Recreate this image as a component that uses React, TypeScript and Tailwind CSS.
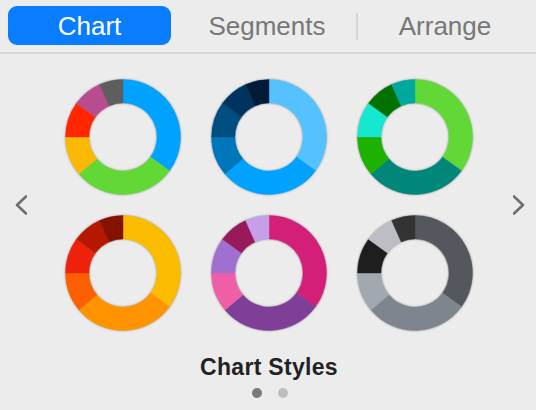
import React from "react";

const ANGLES = [126, 104, 40, 36, 30, 24];

const PALETTES: string[][] = [
  ["#00a2ff", "#61d836", "#fbb905", "#ff2600", "#b84c8e", "#5e5e5e"],
  ["#56c1ff", "#00a2ff", "#0076ba", "#004d80", "#003460", "#011b38"],
  ["#61d836", "#00877a", "#1db100", "#16e7cf", "#017100", "#00a89d"],
  ["#fbbc00", "#ff9300", "#fe5f00", "#ee220c", "#b51800", "#851100"],
  ["#d31f78", "#7f3e98", "#ef5fa7", "#a070d0", "#981a5a", "#c59fe8"],
  ["#55575e", "#7f858e", "#a1a8b0", "#1e1e1e", "#bdbec4", "#333333"],
];

function pt(cx: number, cy: number, rad: number, a: number) {
  const t = (a * Math.PI) / 180;
  return [cx + rad * Math.sin(t), cy - rad * Math.cos(t)];
}

function arc(cx: number, cy: number, R: number, r: number, a0: number, a1: number) {
  const large = a1 - a0 > 180 ? 1 : 0;
  const [x0, y0] = pt(cx, cy, R, a0);
  const [x1, y1] = pt(cx, cy, R, a1);
  const [x2, y2] = pt(cx, cy, r, a1);
  const [x3, y3] = pt(cx, cy, r, a0);
  return `M${x0} ${y0} A${R} ${R} 0 ${large} 1 ${x1} ${y1} L${x2} ${y2} A${r} ${r} 0 ${large} 0 ${x3} ${y3} Z`;
}

function Donut({ colors }: { colors: string[] }) {
  let a = 0;
  return (
    <svg
      width="116"
      height="116"
      viewBox="0 0 116 116"
      className="drop-shadow-[0_0_1px_rgba(0,0,0,0.35)]"
    >
      {ANGLES.map((d, i) => {
        const p = arc(58, 58, 57.5, 34, a, a + d);
        a += d;
        return <path key={i} d={p} fill={colors[i]} stroke={colors[i]} strokeWidth={0.4} />;
      })}
    </svg>
  );
}

export default function App() {
  const font = { fontFamily: '"Liberation Sans", Arial, sans-serif' };
  return (
    <div className="w-[536px] h-[410px] bg-[#ececec] flex flex-col overflow-hidden" style={font}>
      <div className="h-[54px] border-b-2 border-[#d9d9d9] grid grid-cols-3 pr-[2px] pt-[6px] items-start">
        <div className="mx-2 mr-[7px] h-[39px] rounded-[9px] bg-[#0a7cff] flex items-center justify-center text-white text-[26px] leading-none">
          Chart
        </div>
        <div className="h-[39px] flex items-center justify-center text-[#777777] text-[26px] leading-none">
          Segments
        </div>
        <div className="relative h-[39px] flex items-center justify-center text-[#777777] text-[26px] leading-none">
          <div className="absolute left-0 top-[7px] h-[27px] w-[2px] bg-[#d6d6d6]" />
          Arrange
        </div>
      </div>

      <div className="flex items-center pl-[15px] pt-[25px]">
        <svg width="12" height="20" viewBox="0 0 12 20" className="shrink-0">
          <path d="M11 1.5 L2 10 L11 18.5" fill="none" stroke="#6e6e6e" strokeWidth="2.6" strokeLinecap="round" strokeLinejoin="round" />
        </svg>
        <div className="ml-[38px] grid grid-cols-[116px_116px_116px] gap-x-[30px] gap-y-[20px]">
          {PALETTES.map((p, i) => (
            <Donut key={i} colors={p} />
          ))}
        </div>
        <svg width="12" height="20" viewBox="0 0 12 20" className="shrink-0 ml-[40px]">
          <path d="M1 1.5 L10 10 L1 18.5" fill="none" stroke="#6e6e6e" strokeWidth="2.6" strokeLinecap="round" strokeLinejoin="round" />
        </svg>
      </div>

      <div className="mt-[22px] flex justify-center pl-[2px]">
        <div className="text-[23px] leading-[28px] font-bold text-[#222222] tracking-[0.3px]">Chart Styles</div>
      </div>
      <div className="mt-[7px] flex justify-center gap-[16px] pl-[4px]">
        <div className="w-[10px] h-[10px] rounded-full bg-[#7a7a7a]" />
        <div className="w-[10px] h-[10px] rounded-full bg-[#bebebe]" />
      </div>
    </div>
  );
}
